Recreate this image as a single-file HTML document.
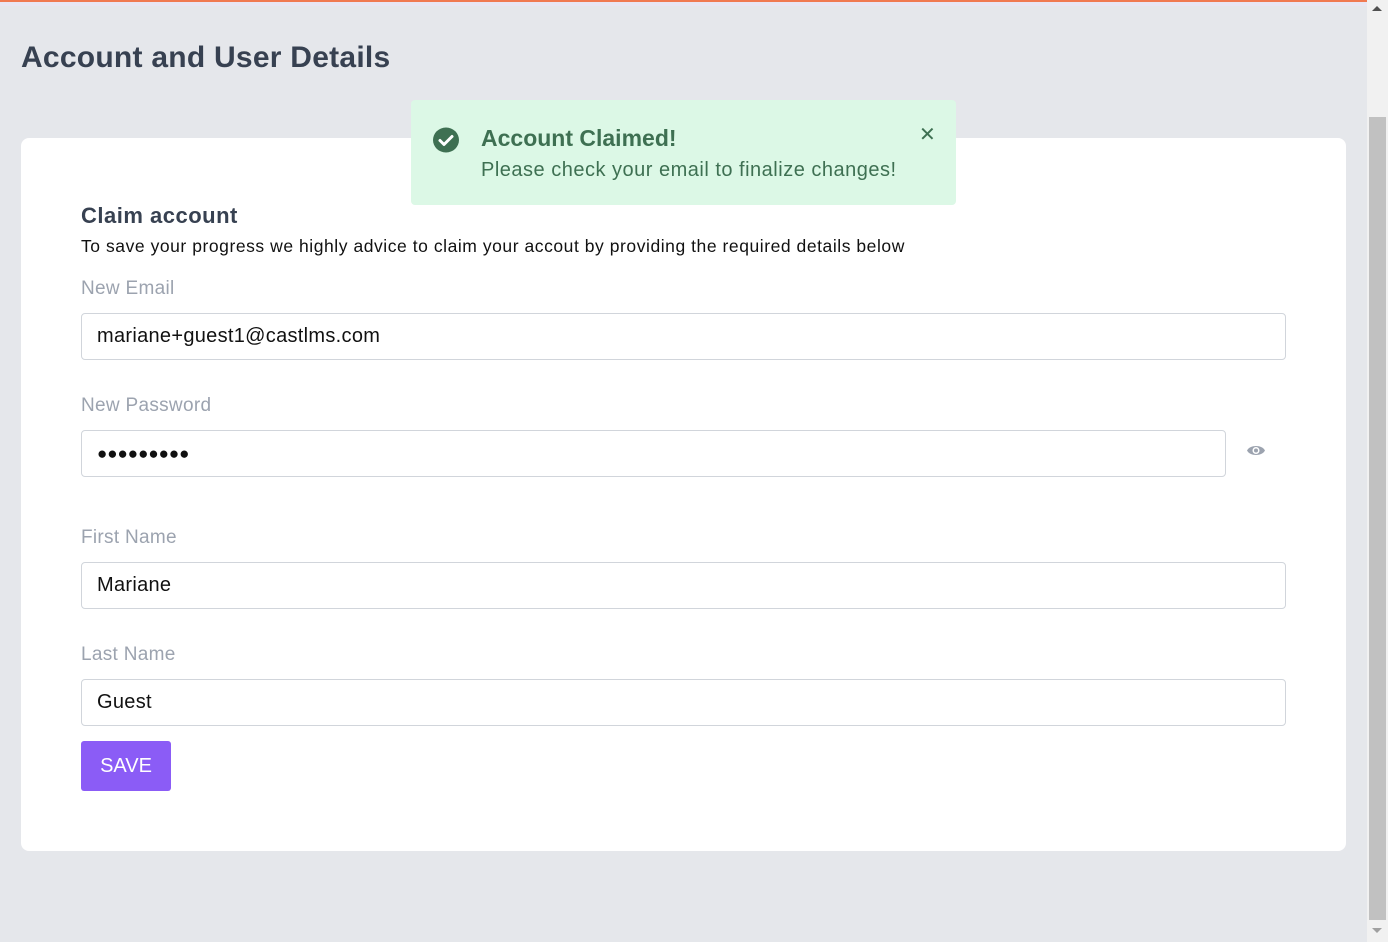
<!DOCTYPE html>
<html><head><style>
*{box-sizing:border-box;margin:0;padding:0}
body{width:1388px;height:942px;overflow:hidden;background:#e5e7eb;font-family:"Liberation Sans",sans-serif;position:relative}
.top{position:absolute;left:0;top:0;width:1367px;height:2px;background:#f07a50}
.top2{position:absolute;left:0;top:2px;width:1367px;height:4px;background:#e8e6f3}
.sb{position:absolute;left:1367px;top:0;width:21px;height:942px;background:#f1f1f1}
.thumb{position:absolute;left:1369px;top:117px;width:17px;height:803px;background:#c1c1c1}
h1{position:absolute;left:21px;top:41px;font-size:30px;font-weight:bold;color:#374151;letter-spacing:0.25px}
.card{position:absolute;left:21px;top:138px;width:1325px;height:713px;background:#fff;border-radius:8px}
.toast{position:absolute;left:411px;top:100px;width:545px;height:105px;background:#dcf8e6;border-radius:4px}
.t1{position:absolute;left:70px;top:25px;font-size:23px;font-weight:bold;color:#3e7052}
.t2{position:absolute;left:70px;top:59px;font-size:20px;color:#3e7052;letter-spacing:0.5px}
.x{position:absolute;left:508px;top:22px;font-size:20px;color:#3e7052}
.abs{position:absolute}
.lab{position:absolute;left:81px;font-size:19px;color:#9ca3af;letter-spacing:0.3px}
.inp{position:absolute;left:81px;width:1205px;height:47px;border:1px solid #d1d5db;border-radius:4px;font-size:20px;color:#111;padding:11px 15px;letter-spacing:0.3px}
.btn{position:absolute;left:81px;top:741px;width:90px;height:50px;background:#8b5cf6;color:#fff;font-size:20px;border-radius:3px;text-align:center;line-height:50px}
</style></head><body>
<div class="top"></div><div class="top2"></div>
<h1>Account and User Details</h1>
<div class="card"></div>
<div class="abs" style="left:81px;top:203px;font-size:22px;font-weight:bold;color:#374151;letter-spacing:0.5px">Claim account</div>
<div class="abs" style="left:81px;top:236px;font-size:17.5px;color:#111;letter-spacing:0.55px">To save your progress we highly advice to claim your accout by providing the required details below</div>
<div class="lab" style="top:278px">New Email</div>
<div class="inp" style="top:313px">mariane+guest1@castlms.com</div>
<div class="lab" style="top:395px">New Password</div>
<div class="inp" style="top:430px;width:1145px;font-size:17px;letter-spacing:0px;padding-top:13px">●●●●●●●●●</div>
<svg class="abs" style="left:1246px;top:443px" width="20" height="15" viewBox="0 0 20 15"><path d="M1 7.5C4 1.5 16 1.5 19 7.5C16 13.5 4 13.5 1 7.5Z" fill="#9ca3af"/><circle cx="10" cy="7.5" r="3.5" fill="#fff"/><circle cx="10" cy="7.5" r="2" fill="#9ca3af"/></svg>
<div class="lab" style="top:527px">First Name</div>
<div class="inp" style="top:562px">Mariane</div>
<div class="lab" style="top:644px">Last Name</div>
<div class="inp" style="top:679px">Guest</div>
<div class="btn">SAVE</div>
<div class="toast">
<svg class="abs" style="left:21px;top:27px" width="28" height="26" viewBox="0 0 28 26"><ellipse cx="14" cy="13" rx="13" ry="12.5" fill="#3e7052"/><path d="M8 13.5l4 4 8-8" stroke="#fff" stroke-width="3" fill="none" stroke-linecap="round" stroke-linejoin="round"/></svg>
<div class="t1">Account Claimed!</div>
<div class="t2">Please check your email to finalize changes!</div>
<div class="x">✕</div>
</div>
<div class="sb"></div><div class="thumb"></div>
<div class="abs" style="left:1372px;top:6px;width:0;height:0;border-left:5px solid transparent;border-right:5px solid transparent;border-bottom:5px solid #505050"></div>
<div class="abs" style="left:1372px;top:928px;width:0;height:0;border-left:5px solid transparent;border-right:5px solid transparent;border-top:5px solid #a0a0a0"></div>
</body></html>
